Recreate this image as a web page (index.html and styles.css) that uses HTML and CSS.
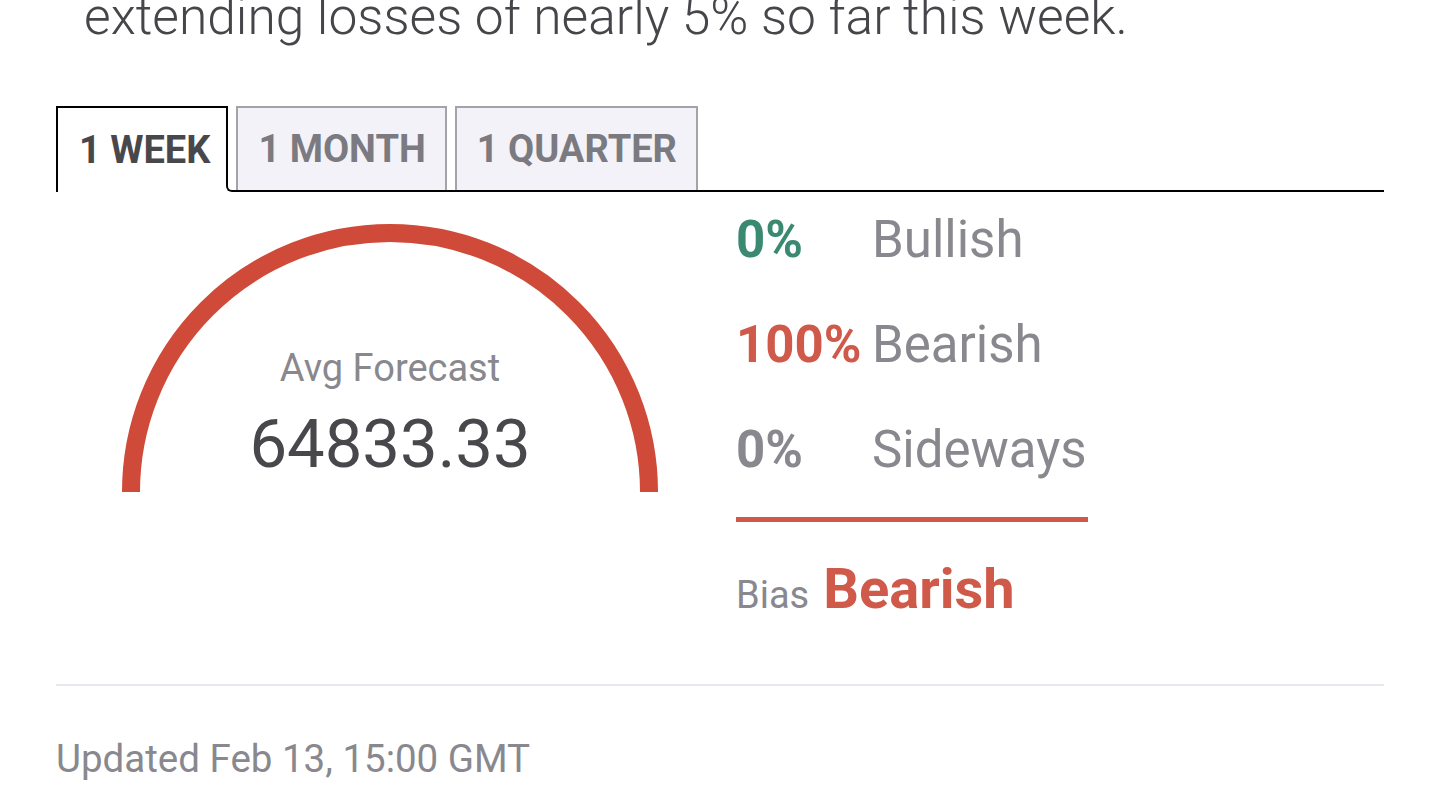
FILE: index.html
```html
<!DOCTYPE html>
<html lang="en">
<head>
<meta charset="utf-8">
<title>Forecast</title>
<link rel="stylesheet" href="styles.css">
</head>
<body>
<div class="page">
  <p class="lead">extending losses of nearly 5% so far this week.</p>

  <div class="tabs">
    <div class="tab active">1 WEEK</div>
    <div class="tab-rest">
      <div class="tab">1 MONTH</div>
      <div class="tab">1 QUARTER</div>
    </div>
  </div>

  <div class="panel">
    <div class="gauge">
      <svg class="gauge-arc" width="536" height="270" viewBox="0 0 536 270">
        <path d="M 9 268 A 259 259 0 0 1 527 268" fill="none" stroke="#cf4a38" stroke-width="18"/>
      </svg>
      <div class="gauge-text">
        <div class="gauge-label">Avg Forecast</div>
        <div class="gauge-value">64833.33</div>
      </div>
    </div>

    <div class="stats">
      <div class="row"><span class="pct bull">0%</span><span class="lbl">Bullish</span></div>
      <div class="row"><span class="pct bear">100%</span><span class="lbl">Bearish</span></div>
      <div class="row"><span class="pct side">0%</span><span class="lbl">Sideways</span></div>
      <div class="bias-line"></div>
      <div class="bias"><span class="bias-lbl">Bias</span><span class="bias-val">Bearish</span></div>
    </div>
  </div>

  <div class="divider"></div>
  <p class="updated">Updated Feb 13, 15:00 GMT</p>
</div>
</body>
</html>
```

FILE: styles.css
```css
html, body {
  margin: 0;
  padding: 0;
  background: #ffffff;
}

body {
  font-family: Roboto, "Liberation Sans", sans-serif;
  overflow: hidden;
}

.page {
  padding: 0 56px;
}

.lead {
  margin: -16px 0 0 28px;
  font-size: 51.5px;
  font-weight: 300;
  line-height: 66px;
  color: #45454a;
  white-space: nowrap;
}

.tabs {
  display: flex;
  align-items: stretch;
  margin-top: 56px;
  height: 86px;
}

.tab {
  display: flex;
  align-items: center;
  padding: 0 19px 0 20px;
  font-size: 38px;
  font-weight: 700;
  color: #7a7a80;
  background: #f2f2f8;
  border: 2px solid #a3a3a8;
  border-bottom: none;
  box-sizing: border-box;
  height: 84px;
}

.tab.active {
  color: #48484c;
  background: #ffffff;
  border: 2px solid #000000;
  border-right: none;
  border-bottom: none;
  height: 86px;
  padding: 0 16px 0 21px;
}

.tab-rest {
  flex: 1;
  display: flex;
  gap: 8px;
  padding-left: 8px;
  border-left: 2px solid #000000;
  border-bottom: 2px solid #000000;
  border-bottom-left-radius: 6px;
  box-sizing: border-box;
}

.panel {
  display: grid;
  grid-template-columns: 668px 1fr;
  column-gap: 12px;
  align-items: start;
}

.gauge {
  display: grid;
  justify-items: center;
  padding-top: 32px;
}

.gauge-arc {
  grid-area: 1 / 1;
  display: block;
}

.gauge-text {
  grid-area: 1 / 1;
  align-self: end;
  text-align: center;
  padding-bottom: 10px;
}

.gauge-label {
  font-size: 38px;
  color: #88888e;
  line-height: 44px;
  margin-bottom: 14px;
}

.gauge-value {
  font-size: 67px;
  color: #48484c;
  line-height: 80px;
}

.stats {
  margin-top: -5px;
}

.row {
  display: flex;
  line-height: 105px;
  font-size: 51px;
}

.pct {
  width: 136px;
  font-weight: 700;
}

.pct.bull { color: #3a8a72; }
.pct.bear { color: #d05a4a; }
.pct.side { color: #88888e; }

.lbl {
  color: #88888e;
}

.bias-line {
  width: 352px;
  height: 5px;
  background: #cf5a4a;
  margin-top: 15px;
}

.bias {
  display: flex;
  align-items: baseline;
  gap: 14px;
  margin-top: 37px;
  line-height: 60px;
}

.bias-lbl {
  font-size: 38px;
  color: #88888e;
}

.bias-val {
  font-size: 56px;
  font-weight: 700;
  color: #d05a4a;
}

.divider {
  height: 2px;
  background: #e8e8ee;
  margin-top: 59px;
}

.updated {
  margin: 48px 0 0;
  font-size: 38.5px;
  line-height: 50px;
  color: #88888e;
}
```
